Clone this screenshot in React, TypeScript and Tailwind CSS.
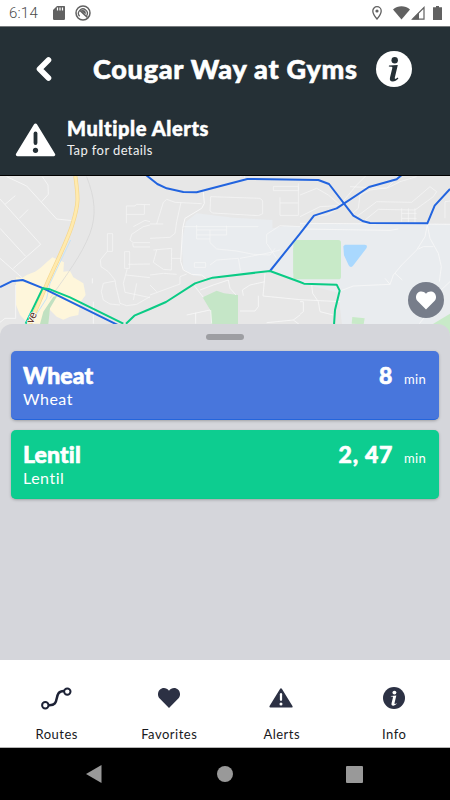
import type { ReactNode } from "react";

interface Departure {
  name: string;
  headsign: string;
  times: string;
  className: string;
}

const DEPARTURES: Departure[] = [
  {
    name: "Wheat",
    headsign: "Wheat",
    times: "8",
    className: "bg-[#4876dc] border-[#2465dc]",
  },
  {
    name: "Lentil",
    headsign: "Lentil",
    times: "2, 47",
    className: "bg-[#0dcd90] border-[#0acb8a]",
  },
];

function InfoIcon({ size, fg, bg }: { size: number; fg: string; bg: string }) {
  return (
    <svg width={size} height={size} viewBox="0 0 36 36">
      <circle cx="18" cy="18" r="18" fill={bg} />
      <circle cx="18.7" cy="9.2" r="3.2" fill={fg} />
      <path
        d="M13 14.6 21.8 14.1 18.9 26.3c-.3 1.3.1 1.8.9 1.5.7-.2 1.2-.7 1.8-1.2l.8.9c-1.8 2-3.6 3-5.7 3-2.4 0-3.3-1.4-2.7-3.9L16.3 17c.2-.9-.2-1.2-1.2-1.3l-2.3-.1z"
        fill={fg}
      />
    </svg>
  );
}

function AlertIcon({ className, fg, bg }: { className: string; fg: string; bg: string }) {
  return (
    <svg className={className} viewBox="0 0 40 34">
      <path
        d="M20 2.2 38 31.6H2z"
        fill={bg}
        stroke={bg}
        strokeWidth="3.4"
        strokeLinejoin="round"
      />
      <path d="M20 10.5v9.500" stroke={fg} strokeWidth="3.800" strokeLinecap="round" />
      <circle cx="20" cy="27.300" r="2.600" fill={fg} />
    </svg>
  );
}

function HeartIcon({ className }: { className: string }) {
  return (
    <svg className={className} viewBox="0 0 22 20" fill="currentColor">
      <path d="M11 20 1.7 10.6C-.7 8.1-.5 3.9 1.8 1.7 4.5-.8 8.7-.4 11 2.7c2.3-3.1 6.5-3.5 9.2-1 2.3 2.2 2.5 6.4.1 8.9z" />
    </svg>
  );
}

function RoutesIcon() {
  return (
    <svg width="32" height="24" viewBox="0 0 32 24" fill="none" stroke="#1d2236" strokeWidth="2">
      <path d="M8 19.200C22 20.500 12 5 24 5" strokeWidth="2.500" />
      <circle cx="5.3" cy="19.3" r="3.2" fill="#fff" />
      <circle cx="27.3" cy="5.6" r="3.2" fill="#fff" />
    </svg>
  );
}

function StatusBar() {
  return (
    <div className="flex h-[27px] items-center justify-between border-b border-[#777b7d] bg-white pr-2 pl-[9px] text-[#616161]">
      <div className="flex items-center">
        <span className="w-[44px] font-['Roboto'] text-[15px] leading-none font-light tracking-[0.2px] text-[#4a4a4a]">
          6:14
        </span>
        <svg width="12" height="14" viewBox="0 0 12 14">
          <path d="M4 0h6.5A1.2 1.2 0 0 1 12 1.2v11.6a1.2 1.2 0 0 1-1.2 1.2H1.2A1.2 1.2 0 0 1 0 12.800V4z" fill="#616161" />
          <path d="M4.500 1.500v3M7 1.500v3M9.500 1.500v3" stroke="#fff" strokeWidth="1.200" />
        </svg>
        <svg className="ml-[10px]" width="16" height="16" viewBox="0 0 16 16" fill="none" stroke="#616161">
          <circle cx="8" cy="8" r="7" strokeWidth="1.500" />
          <path d="M4.600 11.300A4.400 4.400 0 1 1 11.600 10.800" strokeWidth="1.300" />
          <path d="M5 5.500 12.500 12.500" strokeWidth="1.700" />
          <path d="M6 5.500c2-1.500 5 .2 4.700 3.300L9 8z" fill="#616161" strokeWidth=".5" />
        </svg>
      </div>
      <div className="flex items-center">
        <svg width="10" height="14" viewBox="0 0 10 14">
          <path d="M5 .7a4.200 4.200 0 0 1 4.200 4.200C9.200 8 5 13 5 13S.8 8 .8 4.900A4.200 4.200 0 0 1 5 .7z" fill="none" stroke="#616161" strokeWidth="1.300" />
          <circle cx="5" cy="5" r="1.600" fill="#616161" />
        </svg>
        <svg className="ml-[11px]" width="17" height="14" viewBox="0 0 17 14">
          <path d="M0 3.500C5-.8 12-.8 17 3.500L8.500 13.500z" fill="#616161" />
        </svg>
        <svg className="ml-[1px]" width="14" height="14" viewBox="0 0 14 14">
          <path d="M13 1.500v11.700H1.500z" fill="none" stroke="#616161" strokeWidth="1.200" />
          <path d="M8 6.500v7H1z" fill="#616161" />
        </svg>
        <svg className="ml-[8px]" width="9" height="14" viewBox="0 0 9 14">
          <path d="M3 0h3v1.300h3V14H0V1.300h3z" fill="#616161" />
        </svg>
      </div>
    </div>
  );
}

function Header() {
  return (
    <header className="flex h-[149px] flex-col border-b border-black bg-[#253036] text-white">
      <div className="flex h-[84px] items-center pl-[35px]">
        <svg width="18" height="26" viewBox="0 0 18 26">
          <path d="M13.500 4 4.500 13l9 9" fill="none" stroke="#fff" strokeWidth="5.600" strokeLinejoin="round" strokeLinecap="round" />
        </svg>
        <h1 className="-mt-[2px] ml-[40px] w-[283px] text-[27px] leading-none font-black tracking-[0.75px] whitespace-nowrap [-webkit-text-stroke:0.6px_white]">
          Cougar Way at Gyms
        </h1>
        <InfoIcon size={36} fg="#253036" bg="#fff" />
      </div>
      <div className="flex h-[64px] pl-[15px]">
        <AlertIcon className="mt-[12px] h-[34px] w-[41px]" fg="#253036" bg="#fff" />
        <div className="ml-[11px] pt-[6px]">
          <p className="text-[20px] leading-[22px] font-black tracking-[0.6px] [-webkit-text-stroke:0.5px_white]">
            Multiple Alerts
          </p>
          <p className="mt-[3px] text-[13px] leading-[16px] tracking-[0.4px] text-[#f0f1f1]">Tap for details</p>
        </div>
      </div>
    </header>
  );
}

// Drawn at three units per pixel
function RouteMap() {
  return (
    <svg className="block h-[160px] w-full" viewBox="0 3 1350 480" fill="none">
      <rect y="3" width="1350" height="480" fill="#e7e7e7" />

      {/* Campus */}
      <path d="M558 140 590 115 700 128 817 135v25l40-8 43 2V146h450v337H1030l-15-130-110-28-90-38-175 20-60-5-30-20-5-80z" fill="#e9ecef" />
      <path d="M900 198 880 220v75l20 15z" fill="#c8eac8" />
      <rect x="880" y="195" width="143" height="118" rx="8" fill="#c8eac8" />
      <path d="M1035 209h59c9 0 8 8 3 14l-38 49c-5 6-9 5-13-1l-14-30-2-27z" fill="#a9d8fe" />
      <path d="m608 367 42-20 22 8 42 5v90h-80l-2-43z" fill="#c5e6c7" />
      <path d="m1057 426 37 4-3 18-36-2zM1300 446l50-30v60h-50z" fill="#c8eac8" />

      {/* Downtown */}
      <path d="M48 307 65 310 80 300 105 290 120 280 140 262 157 247 192 262 190 290 210 288 220 307 250 325 257 360 240 383 235 420 210 425 190 434 170 425 150 405 140 446H85L60 420 48 390z" fill="#fef6db" />
      <path d="M120 447 130 410 160 365 172 362 150 400 145 447z" fill="#c1e1c1" />

      {/* Minor streets */}
      <g stroke="#f8f8f8" strokeWidth="2.500" strokeLinejoin="round">
        <path d="M20 5 80 33 170 132 218 137M125 80 145 58 144 30 127 5M0 72 122 208 40 280M0 160 77 244M0 250 66 308M15 88 46 62M58 130 84 104M47 330V430L15 430 0 442M277 310V325M280 380V446" />
        <path d="M322 176h16v53h-16zM322 229 301 255 303 275 325 290 345 315 348 335 360 385 380 392 410 388 450 365M345 318 310 325 304 350 310 375 330 387 360 390" strokeWidth="2" />
        <path d="M379 145V93H405L409 88 450 89M379 118H433V90M400 155 435 136 450 140M450 150 430 155 395 178 390 195 400 203H450M398 205 400 216H450M374 230h15v50h-15zM385 268 450 267M382 280 370 325 375 352 450 368M378 300 450 308M410 325 400 375" strokeWidth="2" />
        <path d="M450 147H490M470 147 490 82 500 73 525 82 605 86M543 82 530 140 525 175 510 187 450 190M460 225 515 220 514 285 490 283 460 262 470 225M515 250H543M450 360 540 327V305L560 297M450 330 470 350M450 300 490 295 530 298" strokeWidth="2" />
        <path d="M632 65 780 70 788 77V116L775 122 638 114 630 108zM820 34h75v13h-75zM840 67V121H895V25M840 84H895M720 5 732 0 735 12" strokeWidth="2" />
        <path d="M550 155H775M590 150V192H630M590 165H680V152M590 180H680V165M630 165V203L650 222 710 228 760 238 810 240 825 220M630 270 650 255 715 250 722 290M583 263h34v14h-34zM720 250 800 235 840 225M900 155 840 152 800 178 800 205 830 250" strokeWidth="2" />
        <path d="M583 332 610 367M600 345 640 330 685 315 690 340 708 360M730 362 727 345 750 330 795 320M775 362V395L765 408H720M795 295 789 363 900 374 1020 380M560 420 630 405M587 413V446M632 405 635 446M800 443 880 435 900 420M880 435 900 450" />
        <path d="M610 50 613 85 605 100 555 130 548 160 542 260 550 285 575 298 605 300 620 312" strokeWidth="3" />
      </g>
      <g stroke="#f8f8f8" strokeWidth="2" strokeLinejoin="round">
        <path d="M900 60 950 40 985 60 1020 90 1070 30 1100 0M900 125 960 95 1015 92M945 122 980 120 1015 100M1052 120 1075 100 1080 60 1110 45 1165 38 1200 20 1250 5M1050 35 1160 40 1180 20M1070 125 1130 80 1235 82 1290 35 1310 50 1300 65 1245 105 1135 103 1095 135M1205 100V140M1225 100V142M1245 100V142M1205 115H1250M1205 130H1250M1335 130V80L1350 78" />
        <path d="M900 145 1350 148M900 162 1170 166 1195 162M1282 150 1275 185 1250 225 1205 270 1180 300 1170 328 1060 333 1015 350M1155 310 1170 328M1185 295 1207 315M1282 150 1290 190 1315 235 1324 275 1318 320M1255 222 1270 215 1300 215M1318 350 1350 320M935 330 938 355 955 380 960 410 1000 420M900 380 910 380V410L900 418M1258 446 1275 425" strokeWidth="2.500" />
      </g>

      {/* Railway, creek and highway */}
      <path d="M260 5C285 70 290 120 270 175 245 240 200 300 150 370" stroke="#d3d3d3" strokeWidth="2" />
      <path d="M212 195 188 245 150 325 140 370 105 425 95 447" stroke="#c5e2f6" strokeWidth="3" />
      <path d="M226 3C234 65 238 80 218 145 206 190 165 270 137 335L90 446" stroke="#f5d78d" strokeWidth="12" />
      <path d="M226 3C234 65 238 80 218 145 206 190 165 270 137 335L90 446" stroke="#ffeaae" strokeWidth="8" />

      {/* Bus lines */}
      <g strokeWidth="6" strokeLinejoin="round">
        <path d="M0 336 35 319 68 315 130 340 345 446 400 472" stroke="#2264df" />
        <path d="M438 0 472 27 500 40 550 51 590 52 742 12 955 15 987 27 1060 122 1090 139 1110 144 1282 145 1304 92 1350 42" stroke="#2264df" />
        <path d="M810 288 900 176 942 122 1010 100 1107 36 1190 13 1205 0" stroke="#2264df" />
        <path d="M77 446 128 340 150 343 210 367 370 446M378 446 403 422 450 402 498 381 585 325 638 308 810 288 900 321 912 326 1010 329 1019 347 1005 405 1002 450" stroke="#0acb85" />
      </g>
      <text
        transform="translate(98 448) rotate(-66)"
        fill="#5b2a18"
        stroke="#fff"
        strokeWidth="4"
        paintOrder="stroke"
        fontSize="34"
        fontFamily="Roboto, sans-serif"
      >
        ve
      </text>
    </svg>
  );
}

function DepartureCard({ departure }: { departure: Departure }) {
  return (
    <div
      className={`flex h-[69px] justify-between rounded-[5px] border-b pr-[13px] pl-3 text-white shadow-[0_1px_3px_rgba(0,0,0,0.25)] ${departure.className}`}
    >
      <div className="pt-[11px]">
        <p className="text-[23px] leading-[26px] font-black tracking-[0.1px] [-webkit-text-stroke:0.6px_white]">
          {departure.name}
        </p>
        <p className="mt-[1px] text-[16px] leading-[20px] tracking-[0.5px]">{departure.headsign}</p>
      </div>
      <div className="flex items-baseline pt-[11px]">
        <span className="text-[23px] leading-[26px] font-black tracking-[0.7px] [-webkit-text-stroke:0.6px_white]">
          {departure.times}
        </span>
        <span className="ml-[11px] text-[13px] tracking-[0.3px]">min</span>
      </div>
    </div>
  );
}

function Tab({ label, children }: { label: string; children: ReactNode }) {
  return (
    <div className="flex flex-1 flex-col items-center text-[#2c3144]">
      <div className="mt-[26px] flex h-[24px] items-center">{children}</div>
      <span className="mt-[16px] ml-[1px] text-[13px] leading-[16px] tracking-[0.5px] text-[#17181c]">
        {label}
      </span>
    </div>
  );
}

export default function App() {
  return (
    <div className="flex h-[800px] w-[450px] flex-col overflow-hidden bg-white font-['Lato',sans-serif] [font-variant-ligatures:none]">
      <StatusBar />
      <Header />
      <main className="relative flex h-[484px] flex-col bg-[#d5d6db]">
        <RouteMap />
        <div className="absolute top-[106px] right-[6px] flex h-[36px] w-[36px] items-center justify-center rounded-full bg-[#777d8a] text-white">
          <HeartIcon className="mt-[1px] h-[19px] w-[20px]" />
        </div>
        <section className="relative -mt-[12px] flex-1 rounded-t-[12px] bg-[#d5d6db] px-[11px]">
          <div className="mx-auto mt-[10px] h-[6px] w-[38px] rounded-full bg-[#9d9ea2]" />
          <div className="mt-[11px] flex flex-col gap-[10px]">
            {DEPARTURES.map((d) => (
              <DepartureCard key={d.name} departure={d} />
            ))}
          </div>
        </section>
      </main>
      <nav className="flex h-[88px] border-b border-[#b5b5b5] bg-white">
        <Tab label="Routes">
          <RoutesIcon />
        </Tab>
        <Tab label="Favorites">
          <HeartIcon className="h-[20px] w-[22px]" />
        </Tab>
        <Tab label="Alerts">
          <AlertIcon className="h-[20px] w-[24px]" fg="#fff" bg="#2c3144" />
        </Tab>
        <Tab label="Info">
          <InfoIcon size={22} fg="#fff" bg="#2c3144" />
        </Tab>
      </nav>
      <div className="flex h-[52px] items-center justify-between bg-black pr-[87px] pl-[86px]">
        <svg width="16" height="18" viewBox="0 0 16 18">
          <path d="M15.500 0v18L0 9z" fill="#999" />
        </svg>
        <div className="ml-[1px] h-[16px] w-[16px] rounded-full bg-[#999]" />
        <div className="h-[17px] w-[17px] rounded-[1px] bg-[#999]" />
      </div>
    </div>
  );
}
